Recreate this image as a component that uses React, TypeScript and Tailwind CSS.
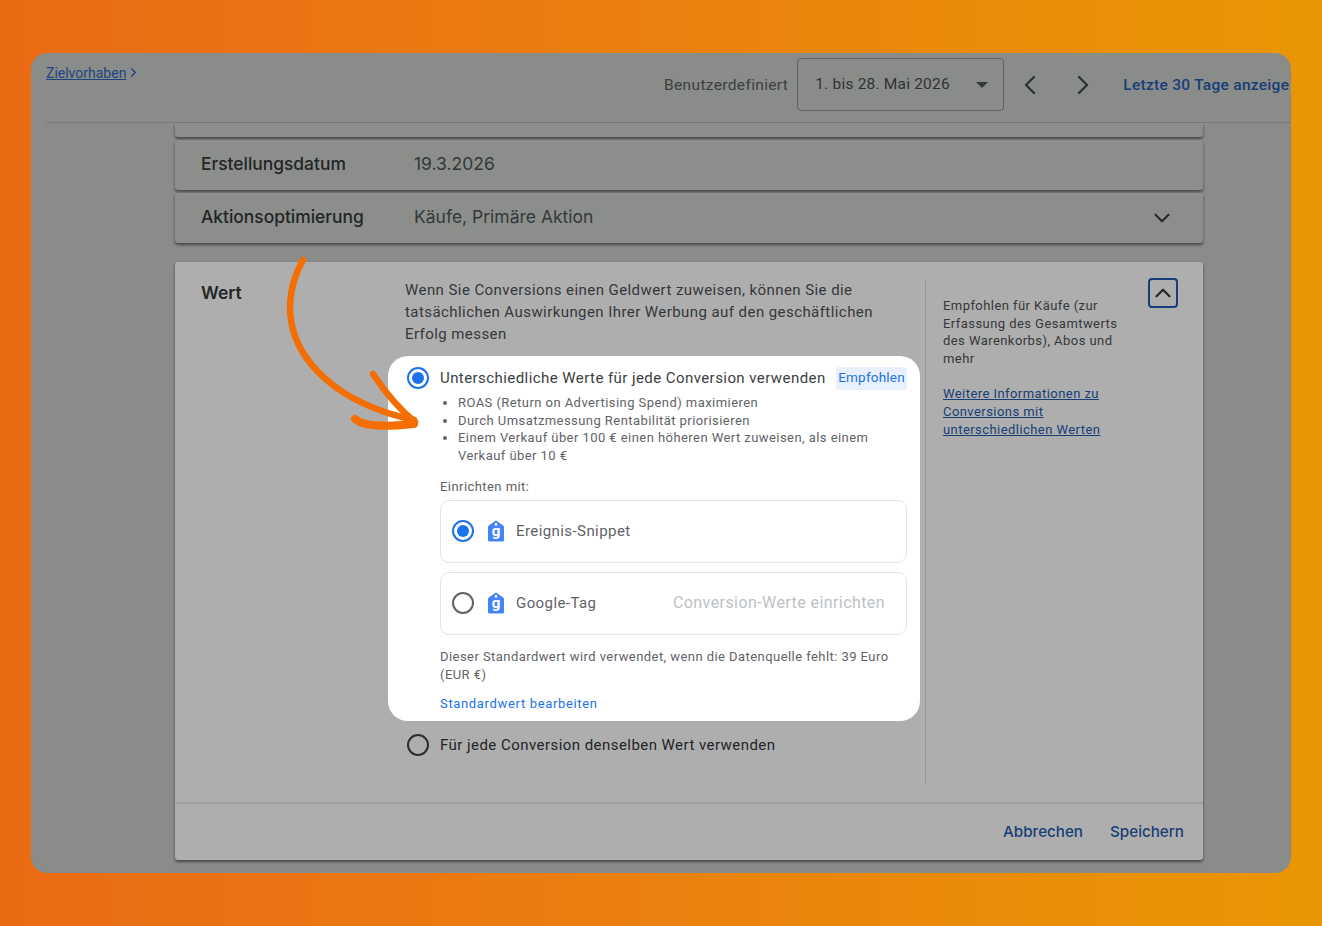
import React from 'react';
import { ChevronDown, ChevronLeft, ChevronRight, ChevronUp } from 'lucide-react';

const roboto = { fontFamily: 'Roboto, sans-serif' };

function Radio({ checked, dark }: { checked?: boolean; dark?: boolean }) {
  if (checked) {
    return (
      <span className="flex h-[22px] w-[22px] shrink-0 items-center justify-center rounded-full border-[2.5px] border-[#1a73e8]">
        <span className="h-[12px] w-[12px] rounded-full bg-[#1a73e8]" />
      </span>
    );
  }
  return (
    <span
      className={`h-[22px] w-[22px] shrink-0 rounded-full border-[2.5px] ${dark ? 'border-[#2b2d2e]' : 'border-[#5f6368]'}`}
    />
  );
}

function TagIcon() {
  return (
    <svg width="16" height="22" viewBox="0 0 16 22" className="shrink-0">
      <path
        d="M8 0.5 L15.2 5.5 Q16 6 16 7 V20 Q16 21.5 14.5 21.5 H1.5 Q0 21.5 0 20 V7 Q0 6 0.8 5.5 Z"
        fill="#4285f4"
      />
      <circle cx="8" cy="4.4" r="1.3" fill="#ffffff" />
      <text
        x="8"
        y="16"
        textAnchor="middle"
        fontSize="15"
        fontWeight="700"
        fill="#ffffff"
        fontFamily="Roboto, sans-serif"
      >
        g
      </text>
    </svg>
  );
}

function SummaryRow({ label, value, chevron }: { label: string; value: string; chevron?: boolean }) {
  return (
    <div className="mt-[3px] flex h-[50px] items-center rounded-[3px] bg-[#8c8e8c] pl-[26px] pr-[28px] shadow-[0_2px_3px_rgba(0,0,0,0.5)]">
      <div className="-mt-[2px] w-[213px] shrink-0 text-[17.4px] font-medium text-[#232527]" style={{ fontFamily: 'Inter, sans-serif' }}>
        {label}
      </div>
      <div className="-mt-[2px] flex-1 text-[17.5px] text-[#35383a]" style={{ fontFamily: 'Inter, sans-serif' }}>
        {value}
      </div>
      {chevron && <ChevronDown className="h-[26px] w-[26px] text-[#27292b]" strokeWidth={2} />}
    </div>
  );
}

export default function App() {
  return (
    <div
      className="relative flex h-[926px] w-full items-start overflow-hidden bg-gradient-to-r from-[#ea6a14] to-[#ea9604] pl-[31px] pt-[53px]"
      style={roboto}
    >
      {/* dimmed page */}
      <div className="flex h-[820px] w-[1260px] flex-col overflow-hidden rounded-[16px] bg-[#8a8c8a]">
        <div className="ml-[15px] flex h-[70px] shrink-0 border-b border-[#787a79]">
          <div className="flex w-[618px] shrink-0 items-start pt-[10px] text-[14px] text-[#1c4480]">
            <a className="underline">Zielvorhaben</a>
            <ChevronRight className="mt-[2px] h-[15px] w-[15px]" strokeWidth={2} />
          </div>
          <div className="flex items-start whitespace-nowrap pt-[5px]">
            <span className="mt-[16px] text-[15.5px] tracking-[0.35px] text-[#3c3f41]">Benutzerdefiniert</span>
            <div className="ml-[9px] flex h-[53px] w-[207px] shrink-0 items-center rounded-[4px] border border-[#5f6161] pl-[17px] pr-[15px] text-[15.5px] tracking-[0.2px] text-[#2f3234]">
              <span>1. bis 28. Mai 2026</span>
              <span className="ml-auto h-0 w-0 border-x-[6px] border-t-[6px] border-x-transparent border-t-[#35383a]" />
            </div>
            <ChevronLeft className="ml-[10px] mt-[11px] h-[32px] w-[32px] shrink-0 text-[#2f3234]" strokeWidth={1.8} />
            <ChevronRight className="ml-[21px] mt-[11px] h-[32px] w-[32px] shrink-0 text-[#2f3234]" strokeWidth={1.8} />
            <span className="ml-[24px] mt-[16px] text-[15.5px] font-medium tracking-[0.28px] text-[#173e75]">Letzte 30 Tage anzeige</span>
          </div>
        </div>

        <div className="ml-[144px] w-[1028px]">
          <div className="h-[14px] rounded-b-[3px] bg-[#8c8e8c] shadow-[0_2px_3px_rgba(0,0,0,0.5)]" />
          <SummaryRow label="Erstellungsdatum" value="19.3.2026" />
          <SummaryRow label="Aktionsoptimierung" value="Käufe, Primäre Aktion" chevron />

          {/* Wert card */}
          <div className="mt-[19px] h-[598px] rounded-[3px] bg-[#aeaeae] shadow-[0_2px_3px_rgba(0,0,0,0.5)]">
            <div className="flex h-[542px] border-b-2 border-[#a0a0a0]">
              <div
                className="w-[230px] shrink-0 pl-[26px] pt-[18px] text-[17.5px] font-semibold text-[#232527]"
                style={{ fontFamily: 'Inter, sans-serif' }}
              >
                Wert
              </div>
              <div className="w-[520px] shrink-0 pt-[17px]">
                <p className="w-[490px] text-[15px] leading-[22px] tracking-[0.43px] text-[#35383a]">
                  Wenn Sie Conversions einen Geldwert zuweisen, können Sie die tatsächlichen Auswirkungen Ihrer Werbung auf den geschäftlichen Erfolg messen
                </p>
                <div className="-ml-[17px] mt-[11px] h-[365px] w-[532px] rounded-[20px] bg-white pl-[52px] pr-[13px] pt-[10px]">
                  <div className="flex h-[24px] items-center text-[15px] tracking-[0.43px] text-[#3c4043]">
                    <span className="-ml-[33px] mr-[11px]">
                      <Radio checked />
                    </span>
                    <span className="whitespace-nowrap">Unterschiedliche Werte für jede Conversion verwenden</span>
                    <span className="ml-auto flex h-[23px] w-[71px] items-center justify-center rounded-[3px] bg-[#e8f0fe] pb-[1px] text-[13.5px] tracking-[0.2px] text-[#1a73e8]">
                      Empfohlen
                    </span>
                  </div>
                  <ul className="mt-[4px] w-[450px] pl-[18px] text-[13px] leading-[17.6px] tracking-[0.44px] text-[#5f6368]">
                    <li className="list-disc">ROAS (Return on Advertising Spend) maximieren</li>
                    <li className="list-disc">Durch Umsatzmessung Rentabilität priorisieren</li>
                    <li className="list-disc">Einem Verkauf über 100 € einen höheren Wert zuweisen, als einem Verkauf über 10 €</li>
                  </ul>
                  <div className="mt-[14px] text-[13px] leading-[18px] tracking-[0.44px] text-[#5f6368]">Einrichten mit:</div>
                  <div className="mt-[4px] flex h-[63px] items-center rounded-[9px] border border-[#e3e4e6] pb-[1px] pl-[11px]">
                    <Radio checked />
                    <span className="ml-[14px]">
                      <TagIcon />
                    </span>
                    <span className="ml-[12px] text-[15px] tracking-[0.42px] text-[#5f6368]">Ereignis-Snippet</span>
                  </div>
                  <div className="mt-[9px] flex h-[63px] items-center rounded-[9px] border border-[#e3e4e6] pb-[1px] pl-[11px] pr-[21px]">
                    <Radio />
                    <span className="ml-[14px]">
                      <TagIcon />
                    </span>
                    <span className="ml-[12px] text-[15px] tracking-[0.42px] text-[#5f6368]">Google-Tag</span>
                    <span className="ml-auto text-[16px] tracking-[0.42px] text-[#bdc1c6]">Conversion-Werte einrichten</span>
                  </div>
                  <p className="mt-[13px] text-[13px] leading-[18px] tracking-[0.44px] text-[#5f6368]">
                    Dieser Standardwert wird verwendet, wenn die Datenquelle fehlt: 39 Euro (EUR €)
                  </p>
                  <a className="mt-[11px] block text-[13px] leading-[18px] tracking-[0.66px] text-[#1a73e8]">Standardwert bearbeiten</a>
                </div>
                <div className="ml-[2px] mt-[13px] flex items-center text-[15px] tracking-[0.45px] text-[#232527]">
                  <Radio dark />
                  <span className="ml-[11px]">Für jede Conversion denselben Wert verwenden</span>
                </div>
              </div>
              <div className="mt-[17px] flex h-[506px] flex-1 border-l-[1.5px] border-[#979797]">
                <div className="w-[201px] shrink-0 pl-[17px] pt-[18px] text-[13px] leading-[17.6px] tracking-[0.44px] text-[#35383a]">
                  <p>Empfohlen für Käufe (zur Erfassung des Gesamtwerts des Warenkorbs), Abos und mehr</p>
                  <a className="mt-[18px] block text-[#173e75] underline">Weitere Informationen zu Conversions mit unterschiedlichen Werten</a>
                </div>
                <div className="ml-[20.5px] -mt-[1px] flex h-[30px] w-[30px] shrink-0 items-center justify-center rounded-[4px] border-2 border-[#173e75]">
                  <ChevronUp className="h-[26px] w-[26px] text-[#232527]" strokeWidth={2} />
                </div>
              </div>
            </div>
            <div className="flex h-[56px] items-center justify-end gap-[27px] pr-[19px] text-[15.2px] font-medium text-[#173e75]" style={{ fontFamily: 'Inter, sans-serif' }}>
              <span>Abbrechen</span>
              <span>Speichern</span>
            </div>
          </div>
        </div>
      </div>

      {/* hand-drawn arrow */}
      <svg className="pointer-events-none absolute left-[270px] top-[255px]" width="160" height="180" viewBox="270 255 160 180" fill="none">
        <path d="M303 260 C292 280 288 300 291 320 C297 360 335 403 414 420" stroke="#f56e02" strokeWidth="6.5" strokeLinecap="round" />
        <path d="M373 374 C385 392 398 408 415 422" stroke="#f56e02" strokeWidth="6.5" strokeLinecap="round" />
        <path d="M355 419 C364 427 385 427 414 424" stroke="#f56e02" strokeWidth="8" strokeLinecap="round" />
      </svg>
    </div>
  );
}
